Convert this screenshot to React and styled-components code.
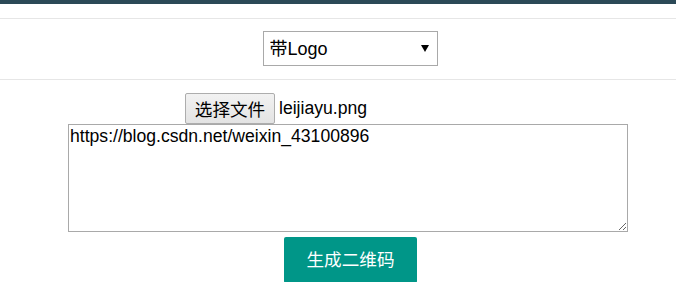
import React from "react";
import styled, { createGlobalStyle } from "styled-components";

const Global = createGlobalStyle`
  html, body { margin: 0; padding: 0; background: #fff; }
  body { font-family: "Liberation Sans", Arial, "Noto Sans CJK SC", sans-serif; color: #000; }
  * { box-sizing: border-box; }
`;

const Page = styled.div`
  width: 676px;
  height: 282px;
  overflow: hidden;
`;

const TopBar = styled.div`
  height: 4px;
  background: #2b4957;
`;

const Band = styled.div`
  padding-top: ${(p) => p.$top}px;
  padding-bottom: ${(p) => p.$bottom}px;
  border-bottom: ${(p) => (p.$line ? "1px solid #e6e6e6" : "none")};
`;

const Row = styled.div`
  display: flex;
  justify-content: ${(p) => (p.$center ? "center" : "flex-start")};
  padding-left: ${(p) => p.$left || 0}px;
  align-items: center;
`;

const SelectWrap = styled.div`
  position: relative;
  width: 175px;
  height: 35px;
`;

const Select = styled.select`
  appearance: none;
  -webkit-appearance: none;
  width: 100%;
  height: 100%;
  border: 1px solid #a9a9a9;
  border-radius: 0;
  background: #fff;
  padding: 0 0 0 6px;
  font-family: "Liberation Sans", Arial, "Noto Sans CJK SC", sans-serif;
  font-size: 18px;
  color: #000;
  outline: none;
`;

const Arrow = styled.svg`
  position: absolute;
  right: 9px;
  top: 14px;
  pointer-events: none;
`;

const FileButton = styled.button`
  height: 31px;
  width: 90px;
  padding: 0;
  border: 1px solid #adadad;
  border-radius: 2px;
  background: linear-gradient(#f2f2f2, #e3e3e3);
  font-family: "Liberation Sans", Arial, "Noto Sans CJK SC", sans-serif;
  font-size: 17.6px;
  color: #000;
`;

const FileName = styled.span`
  margin-left: 4px;
  font-size: 17.6px;
  line-height: 31px;
`;

const TextArea = styled.textarea`
  display: block;
  width: 560px;
  height: 108px;
  border: 1px solid #a9a9a9;
  padding: 1px 1px;
  font-family: "Liberation Sans", Arial, sans-serif;
  font-size: 17.6px;
  line-height: 20px;
  color: #000;
  resize: both;
  outline: none;
`;

const Submit = styled.button`
  width: 133px;
  height: 46px;
  border: none;
  border-radius: 2px;
  background: #009688;
  color: #fff;
  font-family: "Liberation Sans", Arial, "Noto Sans CJK SC", sans-serif;
  font-size: 17.6px;
  line-height: 44px;
  padding: 0;
`;

export default function App() {
  return (
    <Page>
      <Global />
      <TopBar />
      <Band $top={14} $bottom={0} $line />
      <Band $top={12} $bottom={13} $line>
        <Row $center $left={24}>
          <SelectWrap>
            <Select defaultValue="logo">
              <option value="logo">带Logo</option>
              <option value="none">不带Logo</option>
            </Select>
            <Arrow width="8" height="7" viewBox="0 0 8 7">
              <polygon points="0,0 8,0 4,7" fill="#000" />
            </Arrow>
          </SelectWrap>
        </Row>
      </Band>
      <Band $top={13} $bottom={0}>
        <Row $left={185}>
          <FileButton>选择文件</FileButton>
          <FileName>leijiayu.png</FileName>
        </Row>
        <Row $left={68}>
          <TextArea defaultValue="https://blog.csdn.net/weixin_43100896" />
        </Row>
      </Band>
      <Band $top={5} $bottom={0}>
        <Row $center $left={25}>
          <Submit>生成二维码</Submit>
        </Row>
      </Band>
    </Page>
  );
}
